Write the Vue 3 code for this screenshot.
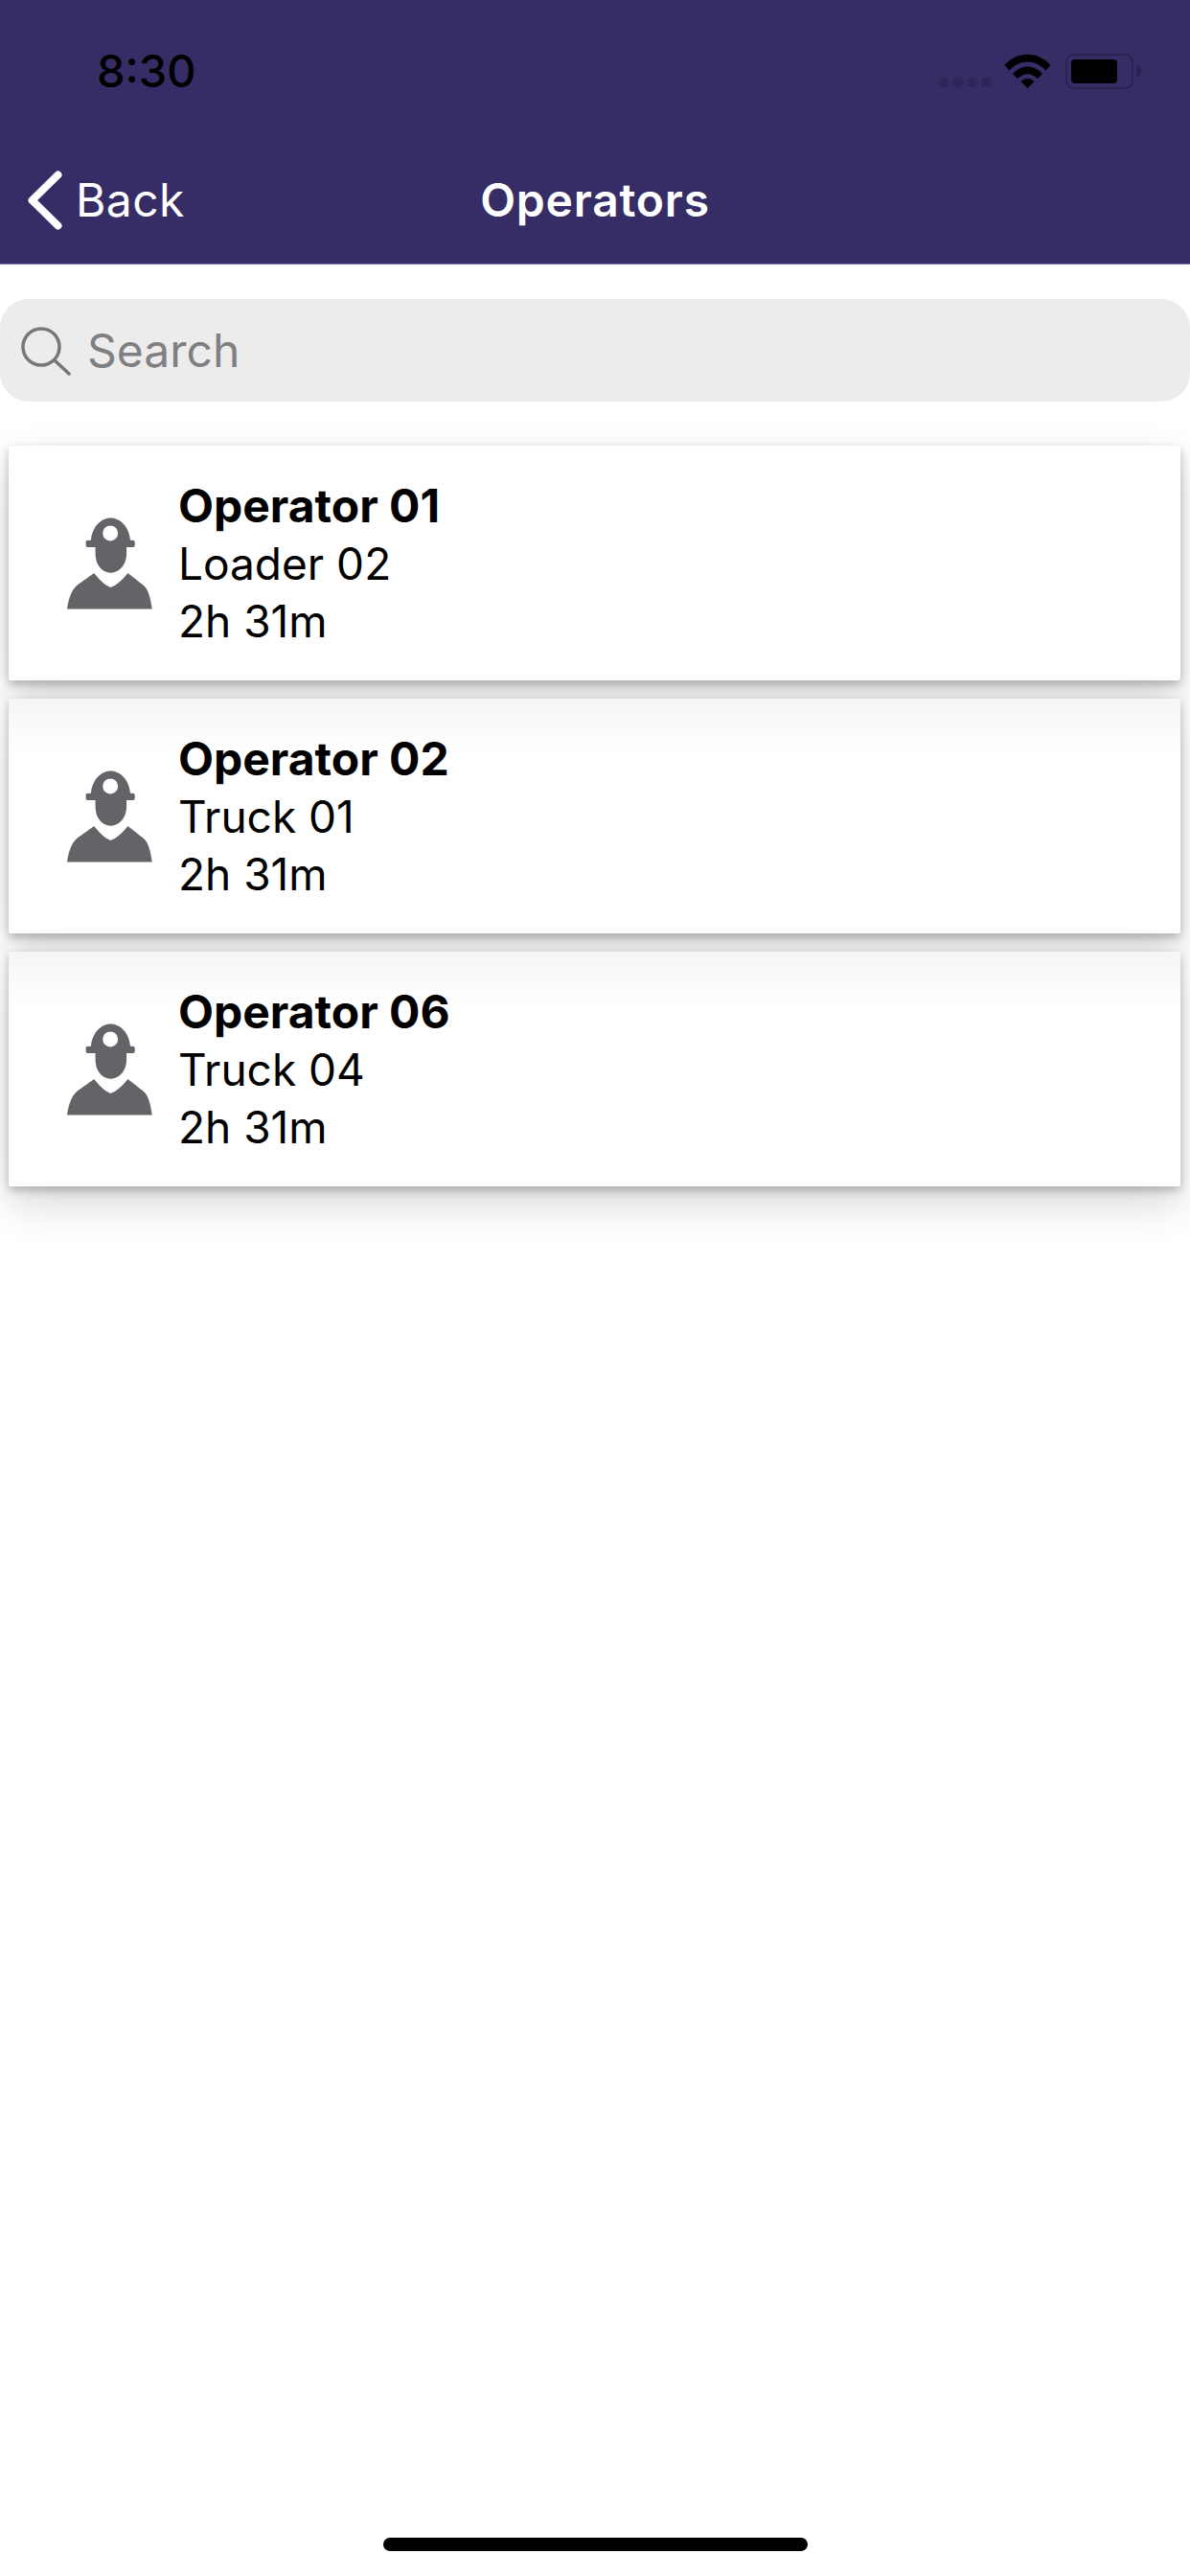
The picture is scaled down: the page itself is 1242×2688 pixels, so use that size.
<template>
  <div class="page">
    <header class="header">
      <div class="status-bar">
        <span class="time">8:30</span>
        <div class="status-icons">
          <div class="signal">
            <i v-for="n in 4" :key="n"></i>
          </div>
          <svg class="wifi" viewBox="0 0 49 36">
            <path d="M0.5 12 C14 -3 35 -3 48.5 12 L43.5 17.5 C32 5.5 17 5.5 5.5 17.5 Z" fill="#000" />
            <path d="M9 21 C18 11 31 11 40 21 L35 26 C28 19.5 21 19.5 14 26 Z" fill="#000" />
            <path d="M17.5 29 C22 25 27 25 31.5 29 L24.5 36 Z" fill="#000" />
          </svg>
          <div class="battery">
            <div class="battery-fill"></div>
          </div>
          <div class="battery-tip"></div>
        </div>
      </div>
      <div class="nav-bar">
        <div class="back">
          <svg class="chevron" viewBox="0 0 36 62">
            <path d="M31.5 4.5 L4.5 31 L31.5 57.5" fill="none" stroke="#fff" stroke-width="8" stroke-linecap="round" stroke-linejoin="round" />
          </svg>
          <span>Back</span>
        </div>
        <div class="title">Operators</div>
      </div>
    </header>

    <div class="search">
      <svg class="search-icon" viewBox="0 0 52 52">
        <circle cx="21" cy="21" r="19" fill="none" stroke="#77777b" stroke-width="3.5" />
        <path d="M35 35 L50 49" fill="none" stroke="#77777b" stroke-width="3.5" stroke-linecap="round" />
      </svg>
      <span>Search</span>
    </div>

    <div class="list">
      <div v-for="op in operators" :key="op.name" class="card">
        <svg class="avatar" viewBox="56 56 274 294">
          <path fill="#636467" d="M118 136 Q118 130 124 130 L134 130 C138 88 165 60 196 60 C227 60 254 88 258 130 L266 130 Q272 130 272 136 L272 146 Q272 152 266 152 L246 152 L246 172 C246 208 222 232 196 232 C170 232 148 208 148 172 L148 152 L124 152 Q118 152 118 146 Z" />
          <circle cx="195" cy="108" r="24" fill="#fff" />
          <path fill="#636467" d="M59 346 L326 346 C322 312 314 284 300 272 L250 233 C236 252 216 270 196 278 C176 270 158 252 144 233 L92 270 C74 284 64 312 59 346 Z" />
        </svg>
        <div class="info">
          <div class="name">{{ op.name }}</div>
          <div>{{ op.machine }}</div>
          <div>{{ op.time }}</div>
        </div>
      </div>
    </div>

    <div class="home-indicator"></div>
  </div>
</template>

<script setup>
const operators = [
  { name: 'Operator 01', machine: 'Loader 02', time: '2h 31m' },
  { name: 'Operator 02', machine: 'Truck 01', time: '2h 31m' },
  { name: 'Operator 06', machine: 'Truck 04', time: '2h 31m' }
];
</script>

<style scoped>
.page {
  width: 1242px;
  height: 2688px;
  background: #fff;
  display: flex;
  flex-direction: column;
  font-family: Inter, "Liberation Sans", sans-serif;
  overflow: hidden;
}

.header {
  height: 276px;
  box-sizing: border-box;
  background: #362d66;
  border-bottom: 1px solid #7a759f;
}

.status-bar {
  height: 148px;
  display: flex;
  justify-content: space-between;
  box-sizing: border-box;
  padding: 47px 51px 0 101px;
}

.time {
  font-size: 47px;
  font-weight: 500;
  line-height: 54px;
  color: #000;
}

.status-icons {
  display: flex;
  align-items: flex-start;
  padding-top: 9px;
}

.signal {
  display: flex;
  gap: 5px;
  margin: 25px 13px 0 0;
}

.signal i {
  width: 10px;
  height: 10px;
  border-radius: 3px;
  background: #2e2558;
}

.wifi {
  width: 49px;
  height: 36px;
  margin-right: 15px;
}

.battery {
  width: 71px;
  height: 37px;
  box-sizing: border-box;
  border: 2px solid #2a2250;
  border-radius: 9px;
  padding: 4px;
}

.battery-fill {
  width: 48px;
  height: 25px;
  background: #000;
  border-radius: 4px;
}

.battery-tip {
  width: 5px;
  height: 12px;
  margin: 12px 0 0 3px;
  background: #2a2250;
  border-radius: 0 6px 6px 0;
}

.nav-bar {
  height: 127px;
  display: flex;
  align-items: flex-start;
  position: relative;
  padding-left: 29px;
  color: #fff;
  font-size: 48px;
  line-height: 56px;
}

.back {
  display: flex;
  align-items: flex-start;
  gap: 14px;
  margin-top: 30px;
}

.back span {
  margin-top: 3px;
  letter-spacing: 0.4px;
}

.chevron {
  width: 36px;
  height: 62px;
}

.title {
  position: absolute;
  left: 0;
  right: 0;
  top: 33px;
  text-align: center;
  font-weight: 600;
  letter-spacing: 0.8px;
}

.search {
  height: 107px;
  margin-top: 36px;
  background: #ececec;
  border-radius: 30px;
  display: flex;
  align-items: center;
  padding-left: 22px;
  color: #808084;
  font-size: 48px;
}

.search-icon {
  width: 52px;
  height: 52px;
  margin-right: 17px;
  margin-top: 3px;
}

.list {
  margin-top: 46px;
  padding: 0 10px 0 9px;
  display: flex;
  flex-direction: column;
  gap: 19px;
}

.card {
  height: 245px;
  display: flex;
  align-items: center;
  padding-left: 60px;
  border-radius: 3px;
  background: #fff;
  box-shadow: 0 4px 10px rgba(0, 0, 0, 0.24), 0 18px 44px rgba(0, 0, 0, 0.16);
  position: relative;
}

.card + .card {
  background: linear-gradient(#f5f5f5, #fff 55px);
}

.avatar {
  width: 91px;
  height: 98px;
  margin-right: 26px;
}

.info {
  font-size: 46px;
  line-height: 60px;
  color: #000;
}

.name {
  font-weight: 700;
  font-size: 48px;
}

.home-indicator {
  width: 443px;
  height: 14px;
  border-radius: 7px;
  background: #000;
  margin: auto auto 26px;
}
</style>
